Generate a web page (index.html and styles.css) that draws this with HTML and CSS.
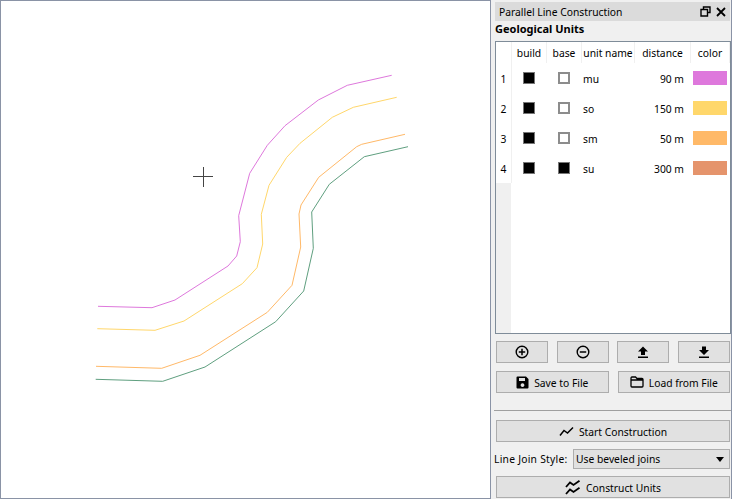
FILE: index.html
```html
<!DOCTYPE html>
<html lang="en">
<head>
    <meta charset="UTF-8">
    <title>Parallel Line Construction</title>
    <link rel="stylesheet" href="styles.css">
</head>
<body>
    <div class="canvas">
        <svg class="map" width="489" height="497" viewBox="1 1 489 497">
            <polyline class="line" stroke="#de78dc" points="98,306.3 152,307.7 175,300 228,266 236.7,256 240.3,241.7 238.7,215.7 249.7,173.3 267.3,145.3 285,125.7 318.3,100 347.3,85.3 391.7,75.3"/>
            <polyline class="line" stroke="#ffd76b" points="97.3,328.7 155,330.3 184,321 242.3,283.7 257,267.7 262.7,244 261.3,214.3 269,185.3 286.7,157.3 300,143.3 332.3,117.3 353.3,107.3 396.7,97.3"/>
            <polyline class="line" stroke="#ffb968" points="96,366.3 161.7,368.3 200,355.3 267.3,312.3 292,285.3 300.7,247 299,214 301,205 318.7,177.3 356.7,146.7 361.7,144.3 405,134.3"/>
            <polyline class="line" stroke="#5f9f7f" points="95.7,379.3 162.7,381.3 205,367 275.7,321.7 303.7,291 313.3,248.3 311.7,212 329.3,184.3 364.3,156.7 408,146.7"/>
            <path class="cross" d="M193 176.500H213M203.500 167V187"/>
        </svg>
    </div>

    <div class="dock">
        <div class="titlebar">
            <span class="title">Parallel Line Construction</span>
            <svg class="winicon" width="11" height="11" viewBox="0 0 11 11"><path d="M3.500 3V1H10V6.500H7.500M1 3.500H7.500V10H1Z" fill="none" stroke="#000" stroke-width="1.400"/></svg>
            <svg class="winicon" width="10" height="10" viewBox="0 0 10 10"><path d="M1 1L9 9M9 1L1 9" fill="none" stroke="#000" stroke-width="1.800"/></svg>
        </div>
        <div class="group-title">Geological Units</div>

        <div class="table">
            <div class="row header">
                <div class="rownum"></div>
                <div class="cell build">build</div>
                <div class="cell base">base</div>
                <div class="cell name">unit name</div>
                <div class="cell dist">distance</div>
                <div class="cell color">color</div>
            </div>
            <div class="row">
                <div class="rownum">1</div>
                <div class="cell build"><span class="check on"></span></div>
                <div class="cell base"><span class="check"></span></div>
                <div class="cell name left">mu</div>
                <div class="cell dist right">90 m</div>
                <div class="cell color"><span class="swatch mu"></span></div>
            </div>
            <div class="row">
                <div class="rownum">2</div>
                <div class="cell build"><span class="check on"></span></div>
                <div class="cell base"><span class="check"></span></div>
                <div class="cell name left">so</div>
                <div class="cell dist right">150 m</div>
                <div class="cell color"><span class="swatch so"></span></div>
            </div>
            <div class="row">
                <div class="rownum">3</div>
                <div class="cell build"><span class="check on"></span></div>
                <div class="cell base"><span class="check"></span></div>
                <div class="cell name left">sm</div>
                <div class="cell dist right">50 m</div>
                <div class="cell color"><span class="swatch sm"></span></div>
            </div>
            <div class="row">
                <div class="rownum">4</div>
                <div class="cell build"><span class="check on"></span></div>
                <div class="cell base"><span class="check on"></span></div>
                <div class="cell name left">su</div>
                <div class="cell dist right">300 m</div>
                <div class="cell color"><span class="swatch su"></span></div>
            </div>
            <div class="table-rest"><div class="rest-side"></div></div>
        </div>

        <div class="btn-row small">
            <div class="btn">
                <svg width="14" height="14" viewBox="0 0 14 14"><circle cx="7" cy="7" r="5.800" fill="none" stroke="#000" stroke-width="1.400"/><path d="M3.800 7H10.200M7 3.800V10.200" stroke="#000" stroke-width="1.500"/></svg>
            </div>
            <div class="btn">
                <svg width="14" height="14" viewBox="0 0 14 14"><circle cx="7" cy="7" r="5.800" fill="none" stroke="#000" stroke-width="1.400"/><path d="M3.800 7H10.200" stroke="#000" stroke-width="1.500"/></svg>
            </div>
            <div class="btn">
                <svg width="12" height="12" viewBox="0 0 12 12"><path d="M6 0.500L11 5.500H8V9H4V5.500H1Z M1 10.500H11V12H1Z" fill="#000"/></svg>
            </div>
            <div class="btn">
                <svg width="12" height="12" viewBox="0 0 12 12"><path d="M4 0.500H8V4H11L6 9L1 4H4Z M1 10.500H11V12H1Z" fill="#000"/></svg>
            </div>
        </div>

        <div class="btn-row wide">
            <div class="btn">
                <svg width="13" height="13" viewBox="0 0 13 13"><path fill-rule="evenodd" d="M0.500 1.500Q0.500 0.500 1.500 0.500H10L12.500 3V11.500Q12.500 12.500 11.500 12.500H1.500Q0.500 12.500 0.500 11.500ZM3 2V5H9V2ZM6.500 7.200A1.900 1.900 0 1 0 6.501 7.200Z" fill="#000"/></svg>
                Save to File
            </div>
            <div class="btn">
                <svg width="14" height="12" viewBox="0 0 14 12"><path d="M1 2.500Q1 1 2 1H5.500L7 2.500H12Q13 2.500 13 3.500V10Q13 11 12 11H2Q1 11 1 10ZM1 4H13" fill="none" stroke="#000" stroke-width="1.300"/></svg>
                Load from File
            </div>
        </div>

        <div class="separator"></div>

        <div class="btn full start">
            <svg width="15" height="11" viewBox="0 0 15 11"><path d="M1 9.500L5 4.500L8.500 7L14 1.500" fill="none" stroke="#000" stroke-width="1.500"/></svg>
            Start Construction
        </div>

        <div class="join-row">
            <span class="join-label">Line Join Style:</span>
            <div class="combo">
                <span>Use beveled joins</span>
                <span class="arrow"></span>
            </div>
        </div>

        <div class="btn full construct">
            <svg width="16" height="15" viewBox="0 0 16 15"><path d="M1 7L5 2.500L8.500 5L14.500 0.800M1 14L5 9.500L8.500 12L14.500 7.800" fill="none" stroke="#000" stroke-width="1.800"/></svg>
            Construct Units
        </div>
    </div>
</body>
</html>
```

FILE: styles.css
```css
html, body {
    margin: 0;
    height: 499px;
    overflow: hidden;
}

body {
    display: flex;
    width: 732px;
    background-color: #f0f0f0;
    font-family: "Noto Sans", sans-serif;
    font-size: 10.3px;
    color: #000;
}

.canvas {
    width: 489px;
    height: 497px;
    border: 1px solid #8a93a6;
    background-color: #fff;
    flex: none;
}

.map {
    display: block;
}

.line {
    fill: none;
    stroke-width: 1;
}

.cross {
    fill: none;
    stroke: #444;
    stroke-width: 1;
}

.dock {
    width: 241px;
    flex: none;
    box-sizing: border-box;
    border-right: 1px solid #8a93a6;
    padding-top: 2px;
}

.titlebar {
    display: flex;
    align-items: center;
    gap: 5px;
    height: 19px;
    margin-left: 4px;
    margin-right: 1px;
    padding: 0 4px;
    background-color: #dbdbdb;
}

.title {
    flex: 1;
}

.group-title {
    height: 20px;
    line-height: 16px;
    margin-left: 4px;
    font-size: 11px;
    font-weight: bold;
}

.table {
    display: flex;
    flex-direction: column;
    height: 291px;
    margin-left: 4px;
    border: 1px solid #7f8c99;
    background-color: #fff;
}

.row {
    display: flex;
    height: 30px;
}

.header {
    height: 21px;
}

.rownum {
    display: flex;
    align-items: center;
    justify-content: center;
    box-sizing: border-box;
    width: 16px;
    padding-top: 2px;
    border-right: 1px solid #f0f0f0;
}

.cell {
    display: flex;
    align-items: center;
    justify-content: center;
    box-sizing: border-box;
    flex: none;
}

.header .cell {
    border-right: 1px solid #f0f0f0;
}

.build { width: 35px; }
.base { width: 35px; }
.name { width: 53px; white-space: nowrap; }
.dist { width: 56px; }
.color { width: 39px; }

.left {
    justify-content: flex-start;
    padding: 2px 0 0 1px;
}

.right {
    justify-content: flex-end;
    padding: 2px 7px 0 0;
}

.check {
    display: block;
    box-sizing: border-box;
    width: 12px;
    height: 12px;
    margin-right: 2px;
    border: 1px solid #8c8c8c;
    box-shadow: inset 0 0 0 1px #8c8c8c;
    background-color: #fff;
}

.check.on {
    background-color: #000;
    border-color: #777;
    box-shadow: none;
}

.swatch {
    display: block;
    width: 34px;
    height: 14px;
    margin-right: 2px;
}

.mu { background-color: #de78dc; }
.so { background-color: #ffd76b; }
.sm { background-color: #ffb968; }
.su { background-color: #e5946c; }

.table-rest {
    flex: 1;
    display: flex;
}

.rest-side {
    width: 15px;
    background-color: #f0f0f0;
}

.btn {
    display: flex;
    align-items: center;
    justify-content: center;
    gap: 5px;
    box-sizing: border-box;
    height: 22px;
    padding-top: 2px;
    border: 1px solid #adadad;
    background-color: #e1e1e1;
}

.btn svg {
    margin-bottom: 2px;
}

.btn-row {
    display: flex;
    margin-left: 5px;
    margin-right: 1px;
}

.btn-row.small {
    justify-content: space-between;
    margin-top: 7px;
}

.btn-row.small .btn {
    width: 52px;
}

.btn-row.wide {
    gap: 9px;
    margin-top: 8px;
}

.btn-row.wide .btn {
    flex: 1;
}

.separator {
    height: 1px;
    margin-top: 17px;
    margin-left: 3px;
    background-color: #a0a0a0;
}

.btn.full {
    margin-left: 5px;
    margin-right: 1px;
}

.start {
    margin-top: 9px;
}

.join-row {
    display: flex;
    align-items: center;
    gap: 5px;
    height: 20px;
    margin-top: 7px;
    margin-left: 3px;
}

.join-label {
    width: 74px;
    letter-spacing: 0.25px;
    white-space: nowrap;
}

.combo {
    flex: 1;
    display: flex;
    align-items: center;
    justify-content: space-between;
    box-sizing: border-box;
    height: 20px;
    padding: 0 3px 0 2px;
    margin-right: 1px;
    border: 1px solid #adadad;
    background-color: #e1e1e1;
}

.arrow {
    width: 0;
    height: 0;
    margin-right: 2px;
    border-left: 4px solid transparent;
    border-right: 4px solid transparent;
    border-top: 5px solid #000;
}

.construct {
    margin-top: 7px;
}
```
